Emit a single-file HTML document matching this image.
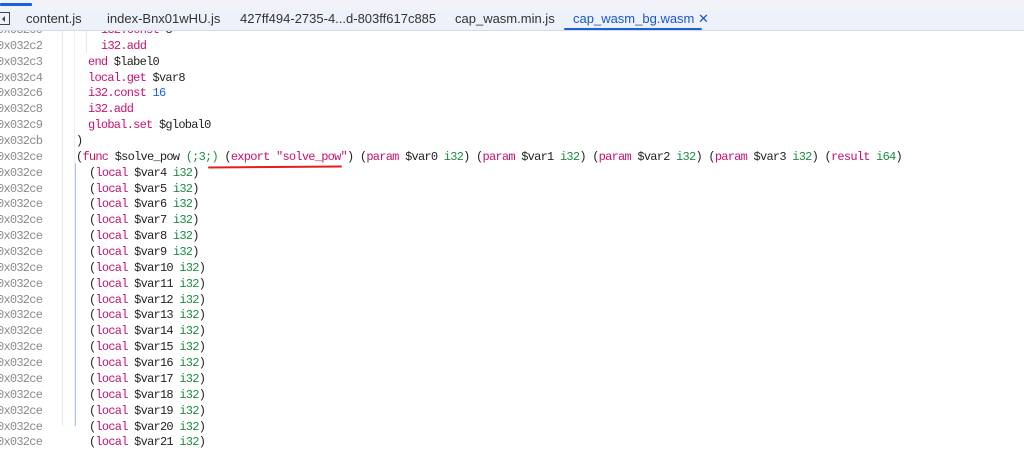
<!DOCTYPE html>
<html><head><style>
body{margin:0;width:1024px;height:426px;overflow:hidden;background:#fff;position:relative;font-family:"Liberation Sans",sans-serif}
.top{position:absolute;left:0;top:0;width:1024px;height:10px;background:#f1f3f8;z-index:2}
.blue{position:absolute;left:0;top:3px;width:32px;height:3px;background:#1a62d8;border-radius:1px}
.tabs{position:absolute;left:0;top:10px;width:1024px;height:20px;background:#edf1fa;border-bottom:1px solid #d3dbeb;z-index:2}
.tab{position:absolute;top:1px;font-size:13px;color:#333;white-space:nowrap;z-index:3}
.act{color:#1a56c8}
.ul{position:absolute;left:564px;top:28px;width:138px;height:2px;background:#1a62d8;border-radius:1px;z-index:3}
.icon{position:absolute;left:0;top:12px;width:9px;height:11px;border:1px solid #444;border-left:none;z-index:3}
.icon:after{content:"";position:absolute;left:2px;top:3px;width:0;height:0;border-top:3px solid transparent;border-bottom:3px solid transparent;border-right:3px solid #444}
.code{position:absolute;left:0;top:0;font-family:"Liberation Mono",monospace;font-size:12px;letter-spacing:-0.75px}
.l{position:absolute;height:16px;line-height:16px;white-space:pre;color:#222}
.a{position:absolute;left:-3px;color:#8a8a8a}
.k{color:#c4136d}.g{color:#1d8a45}.n{color:#1a62d8}
.vl{position:absolute;width:1px;background:#e4e8ef}
</style></head><body>
<div class="top"><div class="blue"></div></div>
<div class="tabs"></div>
<div class="icon"></div>
<div class="tab" style="left:26px;top:11px">content.js</div>
<div class="tab" style="left:107px;top:11px">index-Bnx01wHU.js</div>
<div class="tab" style="left:240px;top:11px">427ff494-2735-4...d-803ff617c885</div>
<div class="tab" style="left:455px;top:11px">cap_wasm.min.js</div>
<div class="tab act" style="left:573px;top:11px">cap_wasm_bg.wasm ✕</div>
<div class="ul"></div>
<div class="vl" style="left:62px;top:31px;height:395px"></div>
<div class="vl" style="left:74px;top:31px;height:395px;background:#eef0f3"></div>
<div class="vl" style="left:86px;top:31px;height:22px"></div>
<div class="vl" style="left:75px;top:163px;height:263px;background:#a9c3ec"></div>
<div class="code" id="c"></div>
<div style="position:absolute;left:208px;top:166px;width:134px;height:2px;background:#e02020;border-radius:1px;transform:rotate(-0.4deg)"></div>
<script>
var rows=[
['0x032c0',101,'<span class="k">i32.const</span> 8'],
['0x032c2',101,'<span class="k">i32.add</span>'],
['0x032c3',88,'<span class="k">end</span> $label0'],
['0x032c4',88,'<span class="k">local.get</span> $var8'],
['0x032c6',88,'<span class="k">i32.const</span> <span class="n">16</span>'],
['0x032c8',88,'<span class="k">i32.add</span>'],
['0x032c9',88,'<span class="k">global.set</span> $global0'],
['0x032cb',76,')'],
['0x032ce',76,'(<span class="k">func</span> $solve_pow <span class="g">(;3;)</span> (<span class="k">export</span> <span class="k">"solve_pow"</span>) (<span class="k">param</span> $var0 <span class="g">i32</span>) (<span class="k">param</span> $var1 <span class="g">i32</span>) (<span class="k">param</span> $var2 <span class="g">i32</span>) (<span class="k">param</span> $var3 <span class="g">i32</span>) (<span class="k">result</span> <span class="g">i64</span>)']
];
for(var i=4;i<=21;i++){rows.push(['0x032ce',89,'(<span class="k">local</span> $var'+i+' <span class="g">i32</span>)'])}
var h='';
for(var j=0;j<rows.length;j++){var y=22+j*15.86;
h+='<div class="l a" style="top:'+y+'px">'+rows[j][0]+'</div><div class="l" style="left:'+rows[j][1]+'px;top:'+y+'px">'+rows[j][2]+'</div>';}
document.getElementById('c').innerHTML=h;
</script>
</body></html>
